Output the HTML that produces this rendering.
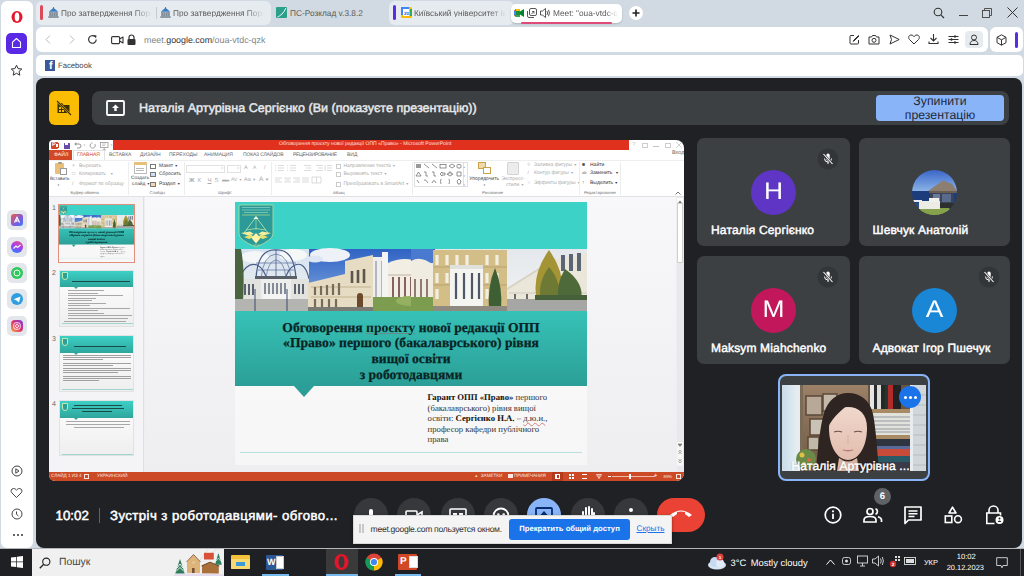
<!DOCTYPE html>
<html><head><meta charset="utf-8">
<style>
*{box-sizing:border-box;margin:0;padding:0}
html,body{text-rendering:geometricPrecision;width:1024px;height:576px;overflow:hidden;background:#d1dae2;font-family:"Liberation Sans",sans-serif;position:relative}
.a{position:absolute}
.t{position:absolute;white-space:nowrap;line-height:1}
svg.a{overflow:visible}
</style></head><body>
<!-- ============ SIDEBAR ============ -->
<div class="a" style="left:1px;top:1px;width:32px;height:547px;background:#fff;border-radius:6px"></div>
<!-- opera logo -->
<svg class="a" style="left:11px;top:11px" width="12" height="12" viewBox="0 0 12 12"><ellipse cx="6" cy="6" rx="5.5" ry="5.9" fill="#e5152b"/><ellipse cx="6" cy="6" rx="2.3" ry="4.4" fill="#fff"/></svg>
<!-- home button -->
<div class="a" style="left:6px;top:33px;width:21px;height:21px;background:#5a29e6;border-radius:5px"></div>
<svg class="a" style="left:11px;top:37px" width="11" height="12" viewBox="0 0 11 12"><path d="M1.5 5.2 L5.5 1.5 L9.5 5.2 V10.5 H1.5 Z" fill="none" stroke="#fff" stroke-width="1.1" stroke-linejoin="round"/></svg>
<!-- star -->
<svg class="a" style="left:10px;top:64px" width="13" height="13" viewBox="0 0 13 13"><path d="M6.5 1.2 L8.1 4.6 L11.8 5 L9 7.5 L9.8 11.2 L6.5 9.3 L3.2 11.2 L4 7.5 L1.2 5 L4.9 4.6 Z" fill="none" stroke="#333" stroke-width="1" stroke-linejoin="round"/></svg>
<!-- messenger apps -->
<div class="a" style="left:7px;top:210px;width:20px;height:20px;background:#e3e7ec;border-radius:5px"></div>
<div class="a" style="left:11px;top:214px;width:12px;height:12px;border-radius:3px;background:linear-gradient(135deg,#f15a3b,#7a5ce6 60%,#3b7df0)"></div>
<svg class="a" style="left:13px;top:216px" width="8" height="8" viewBox="0 0 8 8"><path d="M1.5 6.5 L4 1.5 L6.5 6.5 M3 5 H4.5" fill="none" stroke="#fff" stroke-width="1.3"/></svg>
<div class="a" style="left:7px;top:237px;width:20px;height:20px;background:#e3e7ec;border-radius:5px"></div>
<div class="a" style="left:11px;top:241px;width:12px;height:12px;border-radius:50%;background:linear-gradient(200deg,#f0527e,#a040f0 50%,#1a8cff)"></div>
<svg class="a" style="left:13px;top:244px" width="8" height="6" viewBox="0 0 8 6"><path d="M0.5 4.5 L3 2 L4.5 3.5 L7.5 1" fill="none" stroke="#fff" stroke-width="1.1"/></svg>
<div class="a" style="left:7px;top:263px;width:20px;height:20px;background:#e3e7ec;border-radius:5px"></div>
<div class="a" style="left:11px;top:267px;width:12px;height:12px;border-radius:50%;background:#2fc85a"></div>
<svg class="a" style="left:13px;top:269px" width="8" height="8" viewBox="0 0 8 8"><circle cx="4" cy="4" r="3" fill="none" stroke="#fff" stroke-width="1"/></svg>
<div class="a" style="left:7px;top:289px;width:20px;height:20px;background:#e3e7ec;border-radius:5px"></div>
<div class="a" style="left:11px;top:293px;width:12px;height:12px;border-radius:50%;background:#2f9ee0"></div>
<svg class="a" style="left:13px;top:296px" width="8" height="7" viewBox="0 0 8 7"><path d="M0.5 3.2 L7.5 0.5 L6 6.5 L3.5 4.5 Z" fill="#fff"/></svg>
<div class="a" style="left:7px;top:316px;width:20px;height:20px;background:#e3e7ec;border-radius:5px"></div>
<div class="a" style="left:11px;top:320px;width:12px;height:12px;border-radius:4px;background:linear-gradient(225deg,#7d3ce6,#e1306c 50%,#fcaf45)"></div>
<svg class="a" style="left:13px;top:322px" width="8" height="8" viewBox="0 0 8 8"><rect x="0.8" y="0.8" width="6.4" height="6.4" rx="2" fill="none" stroke="#fff" stroke-width="0.9"/><circle cx="4" cy="4" r="1.5" fill="none" stroke="#fff" stroke-width="0.9"/></svg>
<!-- bottom sidebar icons -->
<svg class="a" style="left:11px;top:465px" width="12" height="12" viewBox="0 0 12 12"><circle cx="6" cy="6" r="5" fill="none" stroke="#444" stroke-width="1"/><path d="M4.8 3.8 L8 6 L4.8 8.2 Z" fill="none" stroke="#444" stroke-width="1" stroke-linejoin="round"/></svg>
<svg class="a" style="left:10px;top:487px" width="13" height="12" viewBox="0 0 13 12"><path d="M6.5 10.5 L1.8 5.8 C0.5 4.4 1 1.6 3.5 1.5 C5 1.4 6 2.5 6.5 3.3 C7 2.5 8 1.4 9.5 1.5 C12 1.6 12.5 4.4 11.2 5.8 Z" fill="none" stroke="#444" stroke-width="1"/></svg>
<svg class="a" style="left:11px;top:508px" width="12" height="12" viewBox="0 0 12 12"><circle cx="6" cy="6" r="5" fill="none" stroke="#444" stroke-width="1"/><path d="M5.5 3.5 V6.3 L7.5 8" fill="none" stroke="#444" stroke-width="1"/></svg>
<div class="a" style="left:12.5px;top:533.5px;width:2.4px;height:2.4px;background:#333;border-radius:50%;box-shadow:4px 0 #333,8px 0 #333"></div>

<!-- ============ TABS ============ -->
<div class="a" style="left:36px;top:1px;width:235px;height:24px;background:#e6ebf0;border-radius:6px"></div>
<div class="a" style="left:40px;top:5px;width:3px;height:15px;background:#dc4a5a;border-radius:2px"></div>
<svg class="a" style="left:48px;top:7px" width="11" height="11" viewBox="0 0 11 11"><path d="M5.5 0.8 L10.3 4.8 H0.7 Z" fill="#3a7cc4"/><path d="M5.5 0 V1.5" stroke="#2a5c94" stroke-width="0.8"/><rect x="1" y="5" width="9" height="4.5" fill="#9aa6b2"/><path d="M2.3 5.5 V9 M4.3 5.5 V9 M6.7 5.5 V9 M8.7 5.5 V9" stroke="#6a7682" stroke-width="0.6"/><rect x="0.3" y="9.3" width="10.4" height="1.5" fill="#7a8692"/></svg>
<div class="t" style="left:61px;top:9px;font-size:8.3px;color:#5a5a5a;width:91px;overflow:hidden;-webkit-mask-image:linear-gradient(90deg,#000 80%,transparent)">Про затвердження Поряд</div>
<div class="a" style="left:156px;top:7px;width:1px;height:12px;background:#c5ccd3"></div>
<svg class="a" style="left:160px;top:7px" width="11" height="11" viewBox="0 0 11 11"><path d="M5.5 0.8 L10.3 4.8 H0.7 Z" fill="#3a7cc4"/><path d="M5.5 0 V1.5" stroke="#2a5c94" stroke-width="0.8"/><rect x="1" y="5" width="9" height="4.5" fill="#9aa6b2"/><path d="M2.3 5.5 V9 M4.3 5.5 V9 M6.7 5.5 V9 M8.7 5.5 V9" stroke="#6a7682" stroke-width="0.6"/><rect x="0.3" y="9.3" width="10.4" height="1.5" fill="#7a8692"/></svg>
<div class="t" style="left:173px;top:9px;font-size:8.3px;color:#5a5a5a;width:91px;overflow:hidden;-webkit-mask-image:linear-gradient(90deg,#000 80%,transparent)">Про затвердження Поряд</div>
<!-- PS tab -->
<svg class="a" style="left:276px;top:7px" width="11" height="11" viewBox="0 0 11 11"><rect width="11" height="11" rx="1" fill="#2aa08a"/><path d="M1.5 10 C4 9 8 6 9.8 1" fill="none" stroke="#fff" stroke-width="1"/></svg>
<div class="t" style="left:290px;top:9px;font-size:8.3px;color:#5a5a5a">ПС-Розклад v.3.8.2</div>
<!-- KNU tab -->
<div class="a" style="left:389px;top:1px;width:125px;height:24px;background:#e6ebf0;border-radius:6px"></div>
<div class="a" style="left:393px;top:5px;width:3px;height:15px;background:#5a2ae6;border-radius:2px"></div>
<svg class="a" style="left:401px;top:7px" width="11" height="11" viewBox="0 0 11 11"><rect width="11" height="11" rx="1.5" fill="#fbbc04"/><rect x="0" y="0" width="8" height="8" fill="#4285f4"/><rect x="2" y="2" width="7" height="7" fill="#fff"/><rect x="8.5" y="2" width="2.5" height="7" fill="#34a853"/><text x="5.5" y="7.6" font-size="4.6" text-anchor="middle" fill="#1a73e8" font-family="Liberation Sans" font-weight="bold">20</text></svg>
<div class="t" style="left:414px;top:9px;font-size:8.3px;color:#5a5a5a;width:92px;overflow:hidden;-webkit-mask-image:linear-gradient(90deg,#000 82%,transparent)">Київський університет імені</div>
<!-- active tab -->
<div class="a" style="left:511px;top:4px;width:111px;height:19px;background:#fff;border-radius:5px;box-shadow:0 1px 2px rgba(0,0,0,.18)"></div>
<div class="a" style="left:521px;top:22px;width:91px;height:2px;background:#e04a78;border-radius:1px"></div>
<svg class="a" style="left:514px;top:9px" width="10" height="8" viewBox="0 0 10 8"><path d="M0 2 L2 0 H6 V8 H2 L0 6 Z" fill="#1e8e3e"/><path d="M0 2 L2 0 V8 L0 6Z" fill="#ea4335"/><rect x="2" y="0" width="4" height="2" fill="#fbbc04"/><rect x="2" y="6" width="4" height="2" fill="#34a853"/><path d="M0 2 H2 V6 H0Z" fill="#4285f4"/><path d="M6 2.5 L10 0 V8 L6 5.5Z" fill="#00832d"/></svg>
<svg class="a" style="left:527px;top:8px" width="10" height="10" viewBox="0 0 10 10"><rect x="2.5" y="0.5" width="7" height="7" rx="1.5" fill="none" stroke="#444" stroke-width="0.9"/><path d="M0.5 3 V8 A1.5 1.5 0 0 0 2 9.5 H7" fill="none" stroke="#444" stroke-width="0.9"/><path d="M4.5 6 L7 3.5 M5 3.5 H7 V5.5" fill="none" stroke="#444" stroke-width="0.8"/></svg>
<svg class="a" style="left:540px;top:8px" width="11" height="10" viewBox="0 0 11 10"><path d="M0.5 3 H2.5 L5.5 0.5 V9.5 L2.5 7 H0.5 Z" fill="none" stroke="#444" stroke-width="0.9" stroke-linejoin="round"/><path d="M7 3 Q8 5 7 7 M8.5 1.8 Q10.3 5 8.5 8.2" fill="none" stroke="#444" stroke-width="0.9"/></svg>
<div class="t" style="left:553px;top:9px;font-size:8.3px;color:#5a5a5a;width:65px;overflow:hidden;-webkit-mask-image:linear-gradient(90deg,#000 82%,transparent)">Meet: "oua-vtdc-qzk"</div>
<!-- new tab + -->
<div class="a" style="left:629px;top:6px;width:14px;height:14px;background:#fff;border-radius:50%"></div>
<svg class="a" style="left:632px;top:9px" width="8" height="8" viewBox="0 0 8 8"><path d="M4 0.5 V7.5 M0.5 4 H7.5" stroke="#222" stroke-width="1.6"/></svg>
<!-- window controls -->
<svg class="a" style="left:933px;top:7px" width="12" height="12" viewBox="0 0 12 12"><circle cx="5" cy="5" r="3.8" fill="none" stroke="#333" stroke-width="1.1"/><path d="M7.8 7.8 L11 11" stroke="#333" stroke-width="1.2"/></svg>
<div class="a" style="left:959px;top:15px;width:9px;height:1px;background:#444"></div>
<svg class="a" style="left:982px;top:8px" width="10" height="10" viewBox="0 0 10 10"><rect x="0.5" y="2.5" width="7" height="7" fill="none" stroke="#444" stroke-width="0.9"/><path d="M2.5 2.5 V0.5 H9.5 V7.5 H7.5" fill="none" stroke="#444" stroke-width="0.9"/></svg>
<svg class="a" style="left:1007px;top:7px" width="11" height="11" viewBox="0 0 11 11"><path d="M0.5 0.5 L10.5 10.5 M10.5 0.5 L0.5 10.5" stroke="#333" stroke-width="1"/></svg>

<!-- ============ ADDRESS BAR ============ -->
<div class="a" style="left:36px;top:27px;width:952px;height:25px;background:#fff;border-radius:6px"></div>
<svg class="a" style="left:45px;top:35px" width="6" height="9" viewBox="0 0 6 9"><path d="M5 0.5 L1 4.5 L5 8.5" fill="none" stroke="#b5bac0" stroke-width="1"/></svg>
<svg class="a" style="left:69px;top:35px" width="6" height="9" viewBox="0 0 6 9"><path d="M1 0.5 L5 4.5 L1 8.5" fill="none" stroke="#b5bac0" stroke-width="1"/></svg>
<svg class="a" style="left:87px;top:34px" width="11" height="11" viewBox="0 0 11 11"><path d="M9.2 5.5 A3.8 3.8 0 1 1 7.8 2.5" fill="none" stroke="#333" stroke-width="1.2"/><path d="M6.5 1 L9.5 1.5 L9 4.5 Z" fill="#333"/></svg>
<svg class="a" style="left:111px;top:35px" width="13" height="10" viewBox="0 0 13 10"><rect x="0.6" y="1.6" width="8" height="7" rx="1" fill="none" stroke="#333" stroke-width="1.1"/><path d="M8.6 4 L12 2 V8 L8.6 6" fill="none" stroke="#333" stroke-width="1.1" stroke-linejoin="round"/></svg>
<svg class="a" style="left:127px;top:34px" width="9" height="11" viewBox="0 0 9 11"><path d="M2 5 V3.5 A2.5 2.5 0 0 1 7 3.5 V5" fill="none" stroke="#333" stroke-width="1.2"/><rect x="0.5" y="5" width="8" height="6" rx="1" fill="#333"/></svg>
<div class="t" style="left:144px;top:36.3px;font-size:8.9px;color:#80868b">meet.<span style="color:#333">google.com</span>/oua-vtdc-qzk</div>
<!-- right icons in address bar -->
<svg class="a" style="left:849px;top:34px" width="11" height="11" viewBox="0 0 11 11"><path d="M5 1.5 H2 A1 1 0 0 0 1 2.5 V9 A1 1 0 0 0 2 10 H8.5 A1 1 0 0 0 9.5 9 V6" fill="none" stroke="#333" stroke-width="1"/><path d="M4.5 6.5 L9.5 1.5 L10 2 L5 7 L4 7.2Z" fill="none" stroke="#333" stroke-width="1"/></svg>
<svg class="a" style="left:868px;top:34px" width="12" height="11" viewBox="0 0 12 11"><path d="M1 3 H3.5 L4.5 1.5 H7.5 L8.5 3 H11 V10 H1 Z" fill="none" stroke="#333" stroke-width="1" stroke-linejoin="round"/><circle cx="6" cy="6.3" r="2" fill="none" stroke="#333" stroke-width="1"/></svg>
<svg class="a" style="left:889px;top:34px" width="11" height="11" viewBox="0 0 11 11"><path d="M1 1 L10.2 5.5 L1 10 L2.5 5.5 Z" fill="none" stroke="#333" stroke-width="1" stroke-linejoin="round"/></svg>
<svg class="a" style="left:908px;top:34px" width="12" height="11" viewBox="0 0 12 11"><path d="M6 10 L1.5 5.5 C0 4 0.5 1.2 3 1 C4.5 0.9 5.5 2 6 2.7 C6.5 2 7.5 0.9 9 1 C11.5 1.2 12 4 10.5 5.5 Z" fill="none" stroke="#333" stroke-width="1"/></svg>
<svg class="a" style="left:928px;top:33px" width="11" height="12" viewBox="0 0 11 12"><path d="M5.5 1 V8 M2.5 5 L5.5 8 L8.5 5" fill="none" stroke="#333" stroke-width="1.1"/><path d="M1 8.5 V10.5 H10 V8.5" fill="none" stroke="#333" stroke-width="1.1"/></svg>
<svg class="a" style="left:948px;top:34px" width="11" height="11" viewBox="0 0 11 11"><path d="M0.5 2.5 H10.5 M0.5 5.5 H10.5 M0.5 8.5 H10.5" stroke="#333" stroke-width="1"/><path d="M7 1.2 V3.8 M3.5 4.2 V6.8 M7 7.2 V9.8" stroke="#333" stroke-width="1.4"/></svg>
<div class="a" style="left:965px;top:31px;width:18px;height:17px;background:#e6ebf0;border-radius:4px"></div>
<svg class="a" style="left:969px;top:34px" width="10" height="11" viewBox="0 0 10 11"><circle cx="5" cy="3.5" r="2.5" fill="none" stroke="#333" stroke-width="1"/><path d="M1 10.5 C1 7.5 3 6.5 5 6.5 C7 6.5 9 7.5 9 10.5 Z" fill="none" stroke="#333" stroke-width="1"/></svg>
<div class="a" style="left:990px;top:27px;width:33px;height:25px;background:#fff;border-radius:6px"></div>
<svg class="a" style="left:996px;top:34px" width="11" height="12" viewBox="0 0 11 12"><path d="M5.5 0.8 L10 3.3 V8.7 L5.5 11.2 L1 8.7 V3.3 Z M1 3.3 L5.5 5.8 L10 3.3 M5.5 5.8 V11.2" fill="none" stroke="#333" stroke-width="1" stroke-linejoin="round"/></svg>
<div class="a" style="left:1015px;top:32px;width:3px;height:16px;background:#5a2ae6;border-radius:2px"></div>

<!-- ============ BOOKMARKS ============ -->
<div class="a" style="left:36px;top:55px;width:987px;height:21px;background:#fff;border-radius:5px"></div>
<div class="a" style="left:45px;top:60px;width:10px;height:11px;background:#3b5998"></div>
<div class="t" style="left:49px;top:61px;font-size:11px;font-weight:bold;color:#fff">f</div>
<div class="t" style="left:58px;top:61.5px;font-size:7.7px;color:#444">Facebook</div>

<!-- ============ MEET ============ -->
<div class="a" style="left:36px;top:78px;width:986px;height:470px;background:#202124;border-radius:8px"></div>
<div class="a" style="left:0;top:548px;width:1024px;height:1px;background:#b4b8bc"></div>

<!-- header -->
<div class="a" style="left:49px;top:91px;width:30px;height:34px;background:#fbbc04;border-radius:6px"></div>
<svg class="a" style="left:56px;top:100px" width="16" height="16" viewBox="0 0 16 16"><path d="M1.5 3 H6 L7.5 5 H13.5 V13 H1.5 Z" fill="#3a3000"/><path d="M3 7 H5 V9 H3Z M6 7 H8 V9 H6Z M3 10 H5 V12 H3Z M6 10 H8 V12 H6Z" fill="#fbbc04"/><path d="M1 1 L15 15" stroke="#fbbc04" stroke-width="2.2"/><path d="M1 1 L15 15" stroke="#3a3000" stroke-width="1.1"/></svg>
<div class="a" style="left:92px;top:91px;width:917px;height:34px;background:#3c4043;border-radius:8px"></div>
<svg class="a" style="left:106px;top:100px" width="19" height="16" viewBox="0 0 19 16"><rect x="1" y="1" width="17" height="14" rx="1" fill="none" stroke="#fff" stroke-width="1.8"/><path d="M9.5 4.5 L6 8 H8.3 V11 H10.7 V8 H13 Z" fill="#fff"/></svg>
<div class="t" style="left:139px;top:102px;font-size:12.55px;color:#e8eaed;-webkit-text-stroke:0.45px #e8eaed">Наталія Артурівна Сергієнко (Ви (показуєте презентацію))</div>
<div class="a" style="left:876px;top:95px;width:128px;height:26px;background:#8ab4f8;border-radius:4px"></div>
<div class="t" style="left:876px;top:95px;width:128px;text-align:center;font-size:12.3px;line-height:13.5px;color:#1f2a3a;white-space:normal">Зупинити<br>презентацію</div>

<!-- ===== PPT WINDOW ===== -->
<div class="a" style="left:49px;top:140px;width:635px;height:341px;background:#fff;border-radius:4px 8px 8px 6px;overflow:hidden">
  <!-- title bar -->
  <div class="a" style="left:64px;top:0;width:516px;height:10px;background:#e0301e"></div>
  <div class="t" style="left:230px;top:2.2px;font-size:5.1px;color:#fbe3df">Обговорення проєкту нової редакції ОПП «Право» -  Microsoft PowerPoint</div>
  <!-- QAT -->
  <div class="a" style="left:2px;top:1.5px;width:7px;height:7.5px;background:#d24726;border-radius:1px"></div>
  <div class="a" style="left:6px;top:2.5px;width:4px;height:5.5px;background:#fff;border:0.5px solid #d24726"></div>
  <div class="t" style="left:3px;top:2.5px;font-size:5.5px;color:#fff;font-weight:bold">P</div>
  <div class="a" style="left:14.5px;top:2.5px;width:6px;height:6px;background:#6a4aa8;border-radius:0.5px"></div>
  <div class="a" style="left:16px;top:2.5px;width:3px;height:2px;background:#fff"></div>
  <svg class="a" style="left:25px;top:2px" width="8" height="7" viewBox="0 0 8 7"><path d="M2 2 H5 A2 2 0 0 1 5 6 H3" fill="none" stroke="#888" stroke-width="0.9"/><path d="M0.3 2 L2.3 0.3 V3.7Z" fill="#888"/></svg>
  <div class="t" style="left:34px;top:2.5px;font-size:4px;color:#aaa"><span style="font-size:0.7em">▼</span></div>
  <svg class="a" style="left:39.5px;top:2px" width="7" height="7" viewBox="0 0 7 7"><path d="M5.8 2 A2.6 2.6 0 1 1 3.5 0.9" fill="none" stroke="#999" stroke-width="0.9"/></svg>
  <svg class="a" style="left:51px;top:1.5px" width="9" height="8" viewBox="0 0 9 8"><rect x="0.5" y="0.5" width="7.5" height="5" fill="none" stroke="#999" stroke-width="0.8"/><path d="M2 2 H6 M2 3.5 H5" stroke="#aaa" stroke-width="0.6"/><path d="M4.2 5.5 V8 M2.5 8 H6" stroke="#999" stroke-width="0.8"/></svg>
  <div class="t" style="left:61px;top:2.5px;font-size:4px;color:#aaa"><span style="font-size:0.7em">▼</span></div>
  <!-- window btns -->
  <div class="t" style="left:583px;top:2px;font-size:6px;color:#c4c4c4">?</div>
  <div class="a" style="left:593px;top:2.5px;width:6px;height:5px;border:0.7px solid #ccc"></div>
  <div class="a" style="left:604px;top:5.5px;width:6px;height:0.7px;background:#c4c4c4"></div>
  <div class="a" style="left:616px;top:2.5px;width:5.5px;height:5px;border:0.7px solid #ccc"></div>
  <svg class="a" style="left:626.5px;top:2px" width="6" height="6" viewBox="0 0 6 6"><path d="M0 0 L6 6 M6 0 L0 6" stroke="#c0c0c0" stroke-width="0.7"/></svg>
  <!-- tabs row -->
  <div class="a" style="left:0;top:10px;width:23px;height:10px;background:#d24726"></div>
  <div class="t" style="left:5px;top:12.5px;font-size:5.2px;color:#fff">ФАЙЛ</div>
  <div class="a" style="left:24px;top:10px;width:32px;height:11px;background:#fff;border:1px solid #e2e2e2;border-bottom:none"></div>
  <div class="t" style="left:28px;top:12.5px;font-size:5px;color:#d24726">ГЛАВНАЯ</div>
  <div class="t" style="left:60px;top:12.5px;font-size:5px;color:#666">ВСТАВКА</div>
  <div class="t" style="left:91px;top:12.5px;font-size:5px;color:#666">ДИЗАЙН</div>
  <div class="t" style="left:120px;top:12.5px;font-size:5px;color:#666">ПЕРЕХОДЫ</div>
  <div class="t" style="left:155px;top:12.5px;font-size:5px;color:#666">АНИМАЦИЯ</div>
  <div class="t" style="left:194px;top:12.5px;font-size:5px;color:#666;letter-spacing:-0.15px">ПОКАЗ СЛАЙДОВ</div>
  <div class="t" style="left:244px;top:12.5px;font-size:5px;color:#666;letter-spacing:-0.3px">РЕЦЕНЗИРОВАНИЕ</div>
  <div class="t" style="left:298px;top:12.5px;font-size:5px;color:#666">ВИД</div>
  <div class="t" style="left:623px;top:11px;font-size:5.5px;color:#666">Вход</div>
  <!-- ribbon -->
  <div class="a" style="left:0;top:20px;width:635px;height:37px;background:#fff;border-top:1px solid #eeeeee;border-bottom:1px solid #e2e2e4"></div>
  <!-- clipboard -->
  <div class="a" style="left:6px;top:23px;width:9px;height:11px;background:#e8c07a;border-radius:1px"></div>
  <div class="a" style="left:8.5px;top:22px;width:4px;height:2px;background:#999;border-radius:1px"></div>
  <div class="a" style="left:11px;top:28px;width:6.5px;height:7px;background:#fff;border:0.8px solid #999"></div>
  <div class="t" style="left:1px;top:37px;font-size:4.6px;color:#444">Вставить</div>
  <div class="t" style="left:8px;top:43px;font-size:4px;color:#666"><span style="font-size:0.7em">▼</span></div>
  <div class="t" style="left:23px;top:23.5px;font-size:5px;color:#aaa">×</div>
  <div class="t" style="left:30px;top:23.5px;font-size:5px;color:#aaa">Вырезать</div>
  <div class="t" style="left:23px;top:32px;font-size:5px;color:#aaa">□</div>
  <div class="t" style="left:30px;top:32px;font-size:5px;color:#aaa">Копировать &nbsp; <span style="font-size:0.7em">▼</span></div>
  <div class="t" style="left:23px;top:41.5px;font-size:5px;color:#aaa">/</div>
  <div class="t" style="left:30px;top:41.5px;font-size:5px;color:#aaa">Формат по образцу</div>
  <div class="t" style="left:21.5px;top:51px;font-size:4.2px;color:#777">Буфер обмена</div>
  <div class="t" style="left:73px;top:51px;font-size:4px;color:#999">·</div>
  <div class="a" style="left:79px;top:22px;width:1px;height:33px;background:#ededed"></div>
  <!-- slides -->
  <div class="a" style="left:85px;top:22px;width:12.5px;height:12px;background:#fff;border:0.8px solid #bbb"></div>
  <div class="a" style="left:85px;top:22px;width:12.5px;height:3px;background:#e8c07a"></div>
  <div class="a" style="left:87px;top:28px;width:8px;height:0.8px;background:#bbb;box-shadow:0 2px 0 #bbb"></div>
  <div class="t" style="left:82px;top:36.5px;font-size:4.8px;color:#444">Создать</div>
  <div class="t" style="left:83px;top:42.5px;font-size:4.8px;color:#444">слайд <span style="font-size:0.7em">▼</span></div>
  <div class="a" style="left:101px;top:23.5px;width:6px;height:5px;border:0.8px solid #777"></div>
  <div class="t" style="left:110px;top:23.5px;font-size:5px;color:#444">Макет <span style="font-size:0.7em">▼</span></div>
  <div class="a" style="left:101px;top:32px;width:6px;height:5px;border:0.8px solid #777;background:#cfe0f4"></div>
  <div class="t" style="left:110px;top:32px;font-size:5px;color:#444">Сбросить</div>
  <div class="a" style="left:101px;top:41.5px;width:6px;height:5px;border:0.8px solid #777;background:#f4d8a8"></div>
  <div class="t" style="left:110px;top:41.5px;font-size:5px;color:#444">Раздел <span style="font-size:0.7em">▼</span></div>
  <div class="t" style="left:100.5px;top:51px;font-size:4.2px;color:#777">Слайды</div>
  <div class="a" style="left:134.5px;top:22px;width:1px;height:33px;background:#ededed"></div>
  <!-- font -->
  <div class="a" style="left:136.5px;top:25px;width:39px;height:8px;border:0.8px solid #e2e2e2"></div>
  <div class="a" style="left:177.5px;top:25px;width:14.5px;height:8px;border:0.8px solid #e2e2e2"></div>
  <div class="t" style="left:172px;top:27px;font-size:3.5px;color:#bbb"><span style="font-size:0.7em">▼</span></div>
  <div class="t" style="left:188px;top:27px;font-size:3.5px;color:#bbb"><span style="font-size:0.7em">▼</span></div>
  <div class="t" style="left:195px;top:25.5px;font-size:5.5px;color:#aaa">A</div>
  <div class="t" style="left:204px;top:25.5px;font-size:5px;color:#aaa">A</div>
  <div class="t" style="left:215px;top:25.5px;font-size:5.5px;color:#aaa">/</div>
  <div class="t" style="left:140px;top:37.5px;font-size:6px;color:#aaa;font-weight:bold">Ж</div>
  <div class="t" style="left:148.5px;top:37.5px;font-size:6px;color:#aaa;font-style:italic">К</div>
  <div class="t" style="left:158.5px;top:37.5px;font-size:6px;color:#aaa;text-decoration:underline">Ч</div>
  <div class="t" style="left:165.5px;top:37.5px;font-size:6px;color:#aaa">S</div>
  <div class="t" style="left:173px;top:38.5px;font-size:4.5px;color:#aaa;text-decoration:line-through">abc</div>
  <div class="t" style="left:182px;top:37.5px;font-size:5px;color:#aaa">AV <span style="font-size:0.7em">▼</span></div>
  <div class="t" style="left:195px;top:37.5px;font-size:5.5px;color:#aaa">Aa <span style="font-size:0.7em">▼</span></div>
  <div class="t" style="left:210px;top:37px;font-size:6.5px;color:#aaa">A <span style="font-size:0.7em">▼</span></div>
  <div class="t" style="left:169px;top:51px;font-size:4.2px;color:#777">Шрифт</div>
  <div class="t" style="left:215px;top:51px;font-size:4px;color:#999">·</div>
  <div class="a" style="left:222px;top:22px;width:1px;height:33px;background:#ededed"></div>
  <!-- paragraph -->
  <svg class="a" style="left:225px;top:24px" width="60" height="20" viewBox="0 0 60 20" fill="none" stroke="#c4c4c4" stroke-width="0.6">
    <path d="M1 1.5 H2 M4 1.5 H10 M1 4 H2 M4 4 H10 M1 6.5 H2 M4 6.5 H10"/><path d="M13 1.5 H14 M16 1.5 H22 M13 4 H14 M16 4 H22 M13 6.5 H14 M16 6.5 H22"/>
    <path d="M30 1.5 H37 M32 4 H37 M30 6.5 H37 M42 1.5 H49 M44 4 H49 M42 6.5 H49"/><path d="M51 1 V7 M53 1.5 H58 M53 4 H58 M53 6.5 H58"/>
    <path d="M1 14 H8 M1 16 H6 M1 18 H8 M10 14 H17 M11 16 H16 M10 18 H17 M19 14 H26 M21 16 H26 M19 18 H26 M28 14 H35 M28 16 H35 M28 18 H35"/>
    <path d="M38 13 H47 V19 H38 Z M42.5 13 V19"/>
  </svg>
  <div class="a" style="left:287px;top:23.5px;width:5px;height:5px;border:0.8px solid #ccc"></div>
  <div class="t" style="left:294.5px;top:23.5px;font-size:5px;color:#aaa">Направление текста <span style="font-size:0.7em">▼</span></div>
  <div class="a" style="left:287px;top:32px;width:5px;height:5px;border:0.8px solid #ccc"></div>
  <div class="t" style="left:294.5px;top:32px;font-size:5px;color:#aaa">Выровнять текст <span style="font-size:0.7em">▼</span></div>
  <div class="a" style="left:287px;top:41.5px;width:5px;height:5px;border:0.8px solid #ccc"></div>
  <div class="t" style="left:294.5px;top:41.5px;font-size:5px;color:#aaa">Преобразовать в SmartArt <span style="font-size:0.7em">▼</span></div>
  <div class="t" style="left:284px;top:51px;font-size:4.2px;color:#777">Абзац</div>
  <div class="t" style="left:356px;top:51px;font-size:4px;color:#999">·</div>
  <div class="a" style="left:363px;top:22px;width:1px;height:33px;background:#ededed"></div>
  <!-- drawing -->
  <div class="a" style="left:365px;top:21.5px;width:54px;height:25px;border:0.8px solid #e0e0e0"></div>
  <div class="a" style="left:413.5px;top:21.5px;width:5.5px;height:25px;border-left:0.8px solid #e0e0e0"></div>
  <div class="t" style="left:414px;top:23px;font-size:3.5px;color:#999;line-height:8px;white-space:pre"><span style="font-size:0.7em">▲</span>
<span style="font-size:0.7em">▼</span>
<span style="font-size:0.7em">▼</span></div>
  <svg class="a" style="left:366px;top:23px" width="47" height="22" viewBox="0 0 47 22" fill="none" stroke="#666" stroke-width="0.7">
    <rect x="1" y="1" width="5" height="4" fill="#999" stroke="none"/><path d="M9 1 L14 5 M17 1 L22 5"/><rect x="25" y="1.5" width="6" height="3.5"/><path d="M34 3 L37 1 L40 3 L37 5 Z"/><rect x="42" y="1.5" width="4" height="3.5" rx="1"/>
    <path d="M1 13 L3.5 9 L6 13 Z M9 9 H11 V13 H13 M17 9 H19 V13 H21 M25 11 L27 9 V10 H30 V12 H27 V13 Z M34 9 H36 V11 H38 L35 13 L32 11 H34Z M42 9 H46 V13 H42Z"/>
    <path d="M2 17 L4 20 M9 17 Q11 16 13 20 M17 20 Q19 15 21 20 M26 16 Q25 18.5 26 21 M34 16 Q35 18.5 34 21 M42 18 L44 16 L46 18 L45 21 H43Z"/>
  </svg>
  <div class="a" style="left:429px;top:22px;width:8px;height:7px;background:#f0d9a8;border:0.8px solid #c9a24a"></div>
  <div class="a" style="left:434px;top:26.5px;width:8px;height:7px;background:#fff;border:0.8px solid #c9a24a"></div>
  <div class="t" style="left:420.3px;top:36.5px;font-size:5px;color:#444">Упорядочить</div>
  <div class="t" style="left:434px;top:43px;font-size:4px;color:#666"><span style="font-size:0.7em">▼</span></div>
  <div class="a" style="left:458px;top:22px;width:11.5px;height:13px;background:#ececec;border:0.8px solid #d4d4d4;border-radius:1px"></div>
  <div class="t" style="left:452.5px;top:36.5px;font-size:5px;color:#aaa">Экспресс-</div>
  <div class="t" style="left:457px;top:42.5px;font-size:5px;color:#aaa">стили <span style="font-size:0.7em">▼</span></div>
  <div class="t" style="left:478.5px;top:22.5px;font-size:5px;color:#aaa">◊</div>
  <div class="t" style="left:485px;top:22.5px;font-size:5px;color:#aaa">Заливка фигуры <span style="font-size:0.7em">▼</span></div>
  <div class="t" style="left:478.5px;top:31.3px;font-size:5px;color:#aaa">/</div>
  <div class="t" style="left:485px;top:31.3px;font-size:5px;color:#aaa">Контур фигуры <span style="font-size:0.7em">▼</span></div>
  <div class="t" style="left:478.5px;top:41px;font-size:5px;color:#aaa">○</div>
  <div class="t" style="left:485px;top:41px;font-size:5px;color:#aaa">Эффекты фигуры <span style="font-size:0.7em">▼</span></div>
  <div class="t" style="left:433px;top:51px;font-size:4.2px;color:#777">Рисование</div>
  <div class="t" style="left:524px;top:51px;font-size:4px;color:#999">·</div>
  <div class="a" style="left:530px;top:22px;width:1px;height:33px;background:#ededed"></div>
  <!-- editing -->
  <div class="t" style="left:533px;top:22.5px;font-size:5px;color:#444;font-weight:bold">■</div>
  <div class="t" style="left:541px;top:22.5px;font-size:5px;color:#333">Найти</div>
  <div class="t" style="left:533px;top:31.3px;font-size:4px;color:#666">ab</div>
  <div class="t" style="left:541px;top:31.3px;font-size:5px;color:#333">Заменить &nbsp;<span style="font-size:0.7em">▼</span></div>
  <div class="t" style="left:533px;top:41px;font-size:5px;color:#666">↑</div>
  <div class="t" style="left:541px;top:41px;font-size:5px;color:#333">Выделить <span style="font-size:0.7em">▼</span></div>
  <div class="t" style="left:535px;top:51px;font-size:4.2px;color:#777">Редактирование</div>
  <div class="a" style="left:570.5px;top:22px;width:1px;height:33px;background:#ededed"></div>
  <svg class="a" style="left:626px;top:51px" width="6" height="4" viewBox="0 0 6 4"><path d="M0.5 3.5 L3 1 L5.5 3.5" fill="none" stroke="#555" stroke-width="0.8"/></svg>
  <!-- work area -->
  <div class="a" style="left:0;top:57px;width:635px;height:275px;background:#eeeef0"></div>
  <div class="a" style="left:0;top:57px;width:95px;height:275px;background:#f4f4f6;border-right:1px solid #e0e0e2"></div>
  <div class="a" style="left:96px;top:57px;width:531px;height:275px;background:linear-gradient(#f8f8fa,#eeeef0)"></div>
  <!-- scrollbar -->
  <div class="a" style="left:627.5px;top:57px;width:7.5px;height:275px;background:#e9e9eb"></div>
  <div class="a" style="left:628px;top:58px;width:6px;height:6px;background:#fff"></div>
  <svg class="a" style="left:629px;top:59.5px" width="4" height="3" viewBox="0 0 4 3"><path d="M0 3 L2 0.5 L4 3Z" fill="#777"/></svg>
  <div class="a" style="left:628px;top:63px;width:6px;height:60px;background:#fff;border:0.7px solid #cfcfcf"></div>
  <div class="a" style="left:628px;top:302px;width:6px;height:24px;background:#f6f6f6"></div>
  <svg class="a" style="left:629px;top:303.5px" width="4" height="20" viewBox="0 0 4 20"><path d="M0 0 L2 2.5 L4 0Z M0.5 8 L2 6 L3.5 8 M0.5 10 L2 8 L3.5 10 M0.5 15 L2 17 L3.5 15 M0.5 17 L2 19 L3.5 17" fill="none" stroke="#777" stroke-width="0.6"/><path d="M0 0 L2 2.5 L4 0Z" fill="#777"/></svg>
  <!-- status bar -->
  <div class="a" style="left:0;top:332px;width:635px;height:9px;background:#cc4a26"></div>
  <div class="t" style="left:2px;top:334.3px;font-size:4.6px;color:#fbe6df">СЛАЙД 1 ИЗ 4</div>
  <div class="a" style="left:35px;top:334px;width:5px;height:4.5px;border:0.7px solid #fbe6df"></div>
  <div class="t" style="left:48px;top:334.3px;font-size:4.6px;color:#fbe6df">УКРАИНСКИЙ</div>
  <div class="t" style="left:425.5px;top:334px;font-size:4.6px;color:#fbe6df"><span style="font-size:0.8em">▲</span></div>
  <div class="t" style="left:431.8px;top:334.3px;font-size:4.6px;color:#fbe6df">ЗАМЕТКИ</div>
  <div class="a" style="left:459.3px;top:334px;width:4.5px;height:4px;background:#fbe6df"></div>
  <div class="t" style="left:465px;top:334.3px;font-size:4.6px;color:#fbe6df;letter-spacing:-0.1px">ПРИМЕЧАНИЯ</div>
  <div class="a" style="left:502.7px;top:332px;width:11px;height:9px;background:#b53a1c"></div>
  <div class="a" style="left:505.5px;top:334px;width:5px;height:5px;border:0.8px solid #fff;border-left-width:2px"></div>
  <div class="a" style="left:519.5px;top:334px;width:2px;height:2px;background:#fff;box-shadow:3px 0 #fff,0 3px #fff,3px 3px #fff"></div>
  <div class="a" style="left:532.5px;top:334px;width:5px;height:5px;border-top:1.5px solid #fff;border-bottom:0.8px solid #fff"></div>
  <svg class="a" style="left:546.5px;top:334px" width="6" height="5" viewBox="0 0 6 5"><path d="M0.5 0.5 H5.5 L3 4.5Z M2 2 H4" fill="none" stroke="#fff" stroke-width="0.7"/></svg>
  <div class="a" style="left:558.5px;top:336.2px;width:3px;height:0.8px;background:#fff"></div>
  <div class="a" style="left:563px;top:336.3px;width:43px;height:0.7px;background:#f0b8a8"></div>
  <div class="a" style="left:580px;top:334px;width:1.5px;height:5px;background:#fff"></div>
  <div class="t" style="left:605px;top:333.5px;font-size:5.5px;color:#fff;font-weight:bold">+</div>
  <div class="t" style="left:614.5px;top:334.5px;font-size:4.3px;color:#fbe6df">89%</div>
  <div class="a" style="left:626.5px;top:334px;width:5px;height:5px;border:0.7px solid #fbe6df"></div>
</div>

<!-- ===== SLIDE THUMBNAILS (page coords) ===== -->
<div class="t" style="left:52px;top:205px;font-size:7px;color:#666">1</div>
<div class="a" style="left:57.5px;top:203.5px;width:77.5px;height:59.5px;border:1.3px solid #e0907a;background:#fff"></div>
<div class="a" style="left:59px;top:205px;width:75px;height:56.5px;overflow:hidden;background:#fff">
<div class="a" style="left:0;top:0;width:352px;height:263px;transform:scale(0.2131,0.2148);transform-origin:0 0;background:linear-gradient(#fdfdfd,#f6f6f6)">
  <div class="a" style="left:0;top:0;width:352px;height:47px;background:#3dd2c8"></div>
  <!-- logo -->
  <svg class="a" style="left:2.5px;top:2px" width="36" height="44" viewBox="0 0 36 44">
    <path d="M1 1 H35 V30 Q35 36 18 43 Q1 36 1 30 Z" fill="#2b9a98" stroke="#9ad8a4" stroke-width="1"/>
    <path d="M4 3.5 H32 M4 6 H32 M6 8.5 H30" stroke="#7cc8b8" stroke-width="0.9"/>
    <path d="M4 11 H32" stroke="#b8e08a" stroke-width="0.7"/>
    <path d="M18 13 L30 29 M18 13 L6 29" fill="none" stroke="#c4e8a0" stroke-width="0.8"/>
    <path d="M15.5 15 L18 12 L20.5 15 Z" fill="#f8f8e0"/>
    <path d="M18 15 V26" stroke="#c4e8a0" stroke-width="0.6"/>
    <path d="M8 26 Q18 23 28 26" fill="none" stroke="#c4e8a0" stroke-width="0.7"/>
    <path d="M3 29 L12 27.5 L16 30 L10 31.5Z M33 29 L24 27.5 L20 30 L26 31.5Z" fill="#f4eea0"/>
    <path d="M6 33 L13 30.5 L16 33 L11 35Z M30 33 L23 30.5 L20 33 L25 35Z" fill="#e8e070"/>
    <path d="M18 29 L22.5 34 L18 39.5 L13.5 34 Z" fill="#fff4a8"/>
    <text x="18" y="41.5" font-size="3" text-anchor="middle" fill="#c8e8b0" font-family="Liberation Serif">1834</text>
  </svg>
  <!-- photo strip -->
  <svg class="a" style="left:0;top:47px" width="352" height="62" viewBox="0 0 352 62">
    <defs>
      <linearGradient id="sky1" x1="0" y1="0" x2="0" y2="1"><stop offset="0" stop-color="#d6e2ee"/><stop offset="1" stop-color="#eef2f2"/></linearGradient>
      <linearGradient id="sky2" x1="0" y1="0" x2="0" y2="1"><stop offset="0" stop-color="#2f62c4"/><stop offset="1" stop-color="#8cb2e2"/></linearGradient>
      <linearGradient id="sky3" x1="0" y1="0" x2="0" y2="1"><stop offset="0" stop-color="#e4e8ec"/><stop offset="1" stop-color="#f2f4f4"/></linearGradient>
    </defs>
    <!-- panel 1 -->
    <rect x="0" y="0" width="74" height="62" fill="url(#sky1)"/>
    <ellipse cx="20" cy="8" rx="14" ry="6" fill="#f4f6f8"/><ellipse cx="58" cy="6" rx="14" ry="6" fill="#f6f8f8"/>
    <path d="M21 31 Q22 0 41 1 Q60 0 61 31" fill="none" stroke="#4a5e8c" stroke-width="1.3"/>
    <path d="M26 30 Q28 6 41 5 Q54 6 56 30 M31 29 Q33 12 41 11 Q49 12 51 29 M21 14 H61 M23 21 H59" fill="none" stroke="#6a7ca4" stroke-width="0.8"/>
    <path d="M3 34 Q10 12 22 16 Q30 20 32 32 M50 32 Q52 20 60 16 Q70 12 74 30" fill="none" stroke="#4a5e8c" stroke-width="1.1"/>
    <path d="M41 1 V28" stroke="#4a5e8c" stroke-width="0.8"/>
    <rect x="20" y="27" width="42" height="3" fill="#5a6068"/>
    <rect x="6" y="30" width="68" height="22" fill="#e2e2de"/>
    <rect x="26" y="30" width="30" height="22" fill="#eeeeec"/>
    <path d="M30 34 V45 M34 34 V45 M38 34 V45 M42 34 V45 M46 34 V45 M50 34 V45" stroke="#6a7280" stroke-width="1.6"/>
    <rect x="28" y="45" width="26" height="6" fill="#f4f4f4"/>
    <path d="M10 35 V46 M14 35 V46 M18 35 V46 M60 35 V45 M64 35 V45 M68 35 V45" stroke="#5a6270" stroke-width="2"/>
    <path d="M0 0 H6 Q10 20 8 52 H0Z" fill="#4a6440"/>
    <rect x="0" y="50" width="74" height="12" fill="#b4b4b0"/>
    <path d="M20 40 V62 M52 40 V62" stroke="#3a4a70" stroke-width="1"/>
    <!-- panel 2 -->
    <rect x="74" y="0" width="126" height="62" fill="url(#sky2)"/>
    <ellipse cx="95" cy="6" rx="20" ry="7" fill="#eef2f8"/><ellipse cx="80" cy="10" rx="8" ry="3.5" fill="#dde6f2"/>
    <path d="M73 34 L110 25 V12 L138 6 V62 H73Z" fill="#e6dcc4"/>
    <path d="M76 38 H136 M76 48 H136" stroke="#c4b48e" stroke-width="1"/>
    <path d="M80 38 V46 M86 37 V46 M92 36 V46 M98 35 V46 M104 34 V46 M80 50 V58 M87 50 V58 M94 50 V58 M101 50 V58" stroke="#766c5a" stroke-width="2.2"/>
    <path d="M117 22 V34 M123 21 V34 M129 20 V34" stroke="#5e5648" stroke-width="2.6"/>
    <path d="M122 47 a3 3 0 0 1 6 0 V60 H122Z" fill="#6b4a2c"/>
    <rect x="138" y="8" width="14" height="44" fill="#eeeeec"/>
    <path d="M141 12 V48 M147 12 V48" stroke="#9aa0aa" stroke-width="1.4"/>
    <rect x="147" y="3" width="6" height="47" fill="#f4f4f2"/>
    <path d="M153 48 V14 Q170 6 186 14 V48Z" fill="#f2eee4"/>
    <path d="M158 28 V48 M164 28 V48 M170 28 V48 M176 28 V48 M182 28 V48" stroke="#6a4040" stroke-width="1.6"/>
    <rect x="153" y="25" width="33" height="2" fill="#d8d0c0"/>
    <rect x="186" y="10" width="12" height="40" fill="#e8e8e6"/>
    <rect x="138" y="48" width="62" height="14" fill="#7c9c50"/>
    <ellipse cx="175" cy="52" rx="14" ry="5" fill="#94b060"/>
    <rect x="73" y="58" width="65" height="4" fill="#7a7a74"/>
    <!-- panel 3 -->
    <rect x="200" y="0" width="152" height="62" fill="url(#sky3)"/>
    <rect x="176" y="0" width="22" height="14" fill="#4a7ad0"/>
    <path d="M176 50 V12 Q186 6 198 16 V50Z" fill="#f0ece2"/>
    <path d="M180 30 V48 M186 30 V48 M192 30 V48" stroke="#6a4a40" stroke-width="1.4"/>
    <rect x="176" y="48" width="22" height="14" fill="#7c9c50"/>
    <rect x="198" y="1" width="74" height="56" fill="#d4be88"/>
    <path d="M202 6 V16 M212 6 V16 M222 6 V16 M232 6 V16 M252 6 V16 M262 6 V16 M202 24 V34 M212 24 V34 M252 24 V34 M262 24 V34 M202 40 V50 M252 40 V50 M262 40 V50" stroke="#f2eee0" stroke-width="3.2"/>
    <path d="M198 18 H272 M198 36 H272" stroke="#b8a474" stroke-width="1"/>
    <rect x="215" y="16" width="33" height="41" fill="#f4f4f0"/>
    <rect x="215" y="16" width="33" height="4" fill="#e0e0dc"/>
    <path d="M221 24 V50 M229 24 V50 M237 24 V50 M244 24 V50" stroke="#505868" stroke-width="2.2"/>
    <path d="M260 19 Q252 38 254 62 H266 Q268 38 260 19Z" fill="#3e5e34"/>
    <path d="M272 40 L320 10 L352 4 V52 H272Z" fill="#ebe6da"/>
    <path d="M272 40 L320 10" stroke="#d8d2c4" stroke-width="2"/>
    <path d="M274 44 H352" stroke="#c8c4b8" stroke-width="0.8"/>
    <path d="M280 45 V50 M292 45 V50 M304 45 V50" stroke="#6a6a68" stroke-width="2"/>
    <path d="M328 6 V22 M336 5 V22 M344 4 V22" stroke="#5a6676" stroke-width="4"/>
    <path d="M314 1 Q296 26 302 52 H326 Q332 26 314 1Z" fill="#a49436"/>
    <path d="M314 18 Q302 34 306 52 H322 Q328 34 314 18Z" fill="#6e7a34"/>
    <path d="M330 20 Q320 36 324 52 H346 Q350 34 330 20Z" fill="#4e6a3a"/>
    <rect x="272" y="50" width="80" height="12" fill="#a6a6a4"/>
    <rect x="300" y="46" width="52" height="5" fill="#46603a"/>
    <rect x="198" y="57" width="74" height="5" fill="#8e8a80"/>
  </svg>
  <!-- title block -->
  <div class="a" style="left:0;top:109px;width:352px;height:75px;background:linear-gradient(#37c2b7,#2b9f97)"></div>
  <div class="a" style="left:59px;top:184px;width:0;height:0;border-left:10px solid transparent;border-right:10px solid transparent;border-top:11px solid #2b9f97"></div>
  <div class="t" style="left:0;top:117.6px;width:352px;text-align:center;font-family:'Liberation Serif',serif;font-weight:bold;font-size:13.6px;line-height:15.75px;color:#082424;-webkit-text-stroke:0.25px #082424;white-space:normal">Обговорення <span style="text-decoration:underline #6a8888;text-decoration-thickness:1px;-webkit-text-stroke:0">проєкту</span> нової редакції ОПП<br>«Право» першого (бакалаврського) рівня<br>вищої освіти<br>з роботодавцями</div>
  <!-- subtitle text -->
  <div class="t" style="left:192.6px;top:190px;font-family:'Liberation Serif',serif;font-size:8.7px;line-height:10.6px;color:#333;white-space:pre"><b style="color:#111">Гарант ОПП «Право»</b> першого
(бакалаврського) рівня вищої
освіти: <b style="color:#111">Сергієнко Н.А.</b> – <span style="text-decoration:underline wavy #d08080;text-decoration-thickness:0.5px">д.ю.н.</span>,
професор кафедри публічного
права</div>
  <div class="a" style="left:5px;top:250px;width:342px;height:1px;background:#b8e2de"></div>
</div>
</div>
<div class="t" style="left:52px;top:270px;font-size:7px;color:#666">2</div>
<div class="a" style="left:59px;top:269.5px;width:75px;height:57px;overflow:hidden;background:linear-gradient(#fff,#eeeeee);border:0.8px solid #e2e2e2">
  <div class="a" style="left:0;top:0;width:75px;height:16.5px;background:linear-gradient(#3cd0c6,#2ea69c)"></div>
  <div class="a" style="left:1.5px;top:1.5px;width:6.5px;height:8px;background:#2e9f95;border-radius:0 0 3px 3px;border:0.5px solid #bfe8b0"></div>
  <div class="a" style="left:14px;top:16.5px;width:0;height:0;border-left:2.5px solid transparent;border-right:2.5px solid transparent;border-top:2.5px solid #2ea69c"></div>
  <div class="a" style="left:12px;top:10px;width:58px;height:1.0px;background:#1c4a48"></div>
  <div class="a" style="left:8px;top:19.5px;width:36px;height:0.8px;background:#a8a8a8"></div>
  <div class="a" style="left:8px;top:22px;width:30px;height:0.8px;background:#a8a8a8"></div>
  <div class="a" style="left:8px;top:24.5px;width:55px;height:0.8px;background:#a8a8a8"></div>
  <div class="a" style="left:8px;top:27px;width:28px;height:0.8px;background:#a8a8a8"></div>
  <div class="a" style="left:8px;top:29.5px;width:24px;height:0.8px;background:#a8a8a8"></div>
  <div class="a" style="left:8px;top:32px;width:38px;height:0.8px;background:#a8a8a8"></div>
  <div class="a" style="left:8px;top:34.5px;width:22px;height:0.8px;background:#a8a8a8"></div>
  <div class="a" style="left:8px;top:37px;width:62px;height:0.8px;background:#a8a8a8"></div>
  <div class="a" style="left:8px;top:39.5px;width:30px;height:0.8px;background:#a8a8a8"></div>
  <div class="a" style="left:8px;top:42px;width:36px;height:0.8px;background:#a8a8a8"></div>
  <div class="a" style="left:8px;top:44.5px;width:64px;height:0.8px;background:#a8a8a8"></div>
  <div class="a" style="left:8px;top:47px;width:60px;height:0.8px;background:#a8a8a8"></div>
  <div class="a" style="left:4px;top:50px;width:62px;height:0.8px;background:#a8a8a8"></div>
  <div class="a" style="left:2px;top:52.5px;width:71px;height:0.8px;background:#9fd4d0"></div>
</div>
<div class="t" style="left:52px;top:336px;font-size:7px;color:#666">3</div>
<div class="a" style="left:59px;top:335px;width:75px;height:57px;overflow:hidden;background:linear-gradient(#fff,#eeeeee);border:0.8px solid #e2e2e2">
  <div class="a" style="left:0;top:0;width:75px;height:16.5px;background:linear-gradient(#3cd0c6,#2ea69c)"></div>
  <div class="a" style="left:1.5px;top:1.5px;width:6.5px;height:8px;background:#2e9f95;border-radius:0 0 3px 3px;border:0.5px solid #bfe8b0"></div>
  <div class="a" style="left:14px;top:16.5px;width:0;height:0;border-left:2.5px solid transparent;border-right:2.5px solid transparent;border-top:2.5px solid #2ea69c"></div>
  <div class="a" style="left:14px;top:9.5px;width:52px;height:1.0px;background:#1c4a48"></div>
  <div class="a" style="left:3px;top:19px;width:68px;height:0.8px;background:#a0a0a0"></div>
  <div class="a" style="left:3px;top:21px;width:68px;height:0.8px;background:#a0a0a0"></div>
  <div class="a" style="left:3px;top:23px;width:40px;height:0.8px;background:#a0a0a0"></div>
  <div class="a" style="left:3px;top:26.5px;width:68px;height:0.8px;background:#a0a0a0"></div>
  <div class="a" style="left:3px;top:28.5px;width:50px;height:0.8px;background:#a0a0a0"></div>
  <div class="a" style="left:3px;top:32px;width:68px;height:0.8px;background:#a0a0a0"></div>
  <div class="a" style="left:3px;top:34px;width:68px;height:0.8px;background:#a0a0a0"></div>
  <div class="a" style="left:3px;top:36px;width:55px;height:0.8px;background:#a0a0a0"></div>
  <div class="a" style="left:3px;top:39.5px;width:68px;height:0.8px;background:#a0a0a0"></div>
  <div class="a" style="left:3px;top:41.5px;width:68px;height:0.8px;background:#a0a0a0"></div>
  <div class="a" style="left:3px;top:43.5px;width:36px;height:0.8px;background:#a0a0a0"></div>
  <div class="a" style="left:2px;top:53px;width:71px;height:0.8px;background:#9fd4d0"></div>
</div>
<div class="t" style="left:52px;top:401px;font-size:7px;color:#666">4</div>
<div class="a" style="left:59px;top:400px;width:75px;height:56px;overflow:hidden;background:linear-gradient(#fff,#eeeeee);border:0.8px solid #e2e2e2">
  <div class="a" style="left:0;top:0;width:75px;height:16.5px;background:linear-gradient(#3cd0c6,#2ea69c)"></div>
  <div class="a" style="left:1.5px;top:1.5px;width:6.5px;height:8px;background:#2e9f95;border-radius:0 0 3px 3px;border:0.5px solid #bfe8b0"></div>
  <div class="a" style="left:14px;top:16.5px;width:0;height:0;border-left:2.5px solid transparent;border-right:2.5px solid transparent;border-top:2.5px solid #2ea69c"></div>
  <div class="a" style="left:14px;top:4px;width:48px;height:0.9px;background:#1c4a48"></div>
  <div class="a" style="left:12px;top:7px;width:52px;height:0.9px;background:#1c4a48"></div>
  <div class="a" style="left:22px;top:10px;width:30px;height:0.9px;background:#1c4a48"></div>
  <div class="a" style="left:6px;top:19.5px;width:64px;height:0.8px;background:#a8a8a8"></div>
  <div class="a" style="left:6px;top:22.5px;width:64px;height:0.8px;background:#a8a8a8"></div>
  <div class="a" style="left:14px;top:25.5px;width:50px;height:0.8px;background:#a8a8a8"></div>
  <div class="a" style="left:2px;top:52.5px;width:71px;height:0.8px;background:#9fd4d0"></div>
</div>
<!-- ===== MAIN SLIDE ===== -->
<div class="a" style="left:235px;top:202px;width:352px;height:263px;overflow:hidden;background:linear-gradient(#fdfdfd,#f6f6f6)">
  <div class="a" style="left:0;top:0;width:352px;height:47px;background:#3dd2c8"></div>
  <!-- logo -->
  <svg class="a" style="left:2.5px;top:2px" width="36" height="44" viewBox="0 0 36 44">
    <path d="M1 1 H35 V30 Q35 36 18 43 Q1 36 1 30 Z" fill="#2b9a98" stroke="#9ad8a4" stroke-width="1"/>
    <path d="M4 3.5 H32 M4 6 H32 M6 8.5 H30" stroke="#7cc8b8" stroke-width="0.9"/>
    <path d="M4 11 H32" stroke="#b8e08a" stroke-width="0.7"/>
    <path d="M18 13 L30 29 M18 13 L6 29" fill="none" stroke="#c4e8a0" stroke-width="0.8"/>
    <path d="M15.5 15 L18 12 L20.5 15 Z" fill="#f8f8e0"/>
    <path d="M18 15 V26" stroke="#c4e8a0" stroke-width="0.6"/>
    <path d="M8 26 Q18 23 28 26" fill="none" stroke="#c4e8a0" stroke-width="0.7"/>
    <path d="M3 29 L12 27.5 L16 30 L10 31.5Z M33 29 L24 27.5 L20 30 L26 31.5Z" fill="#f4eea0"/>
    <path d="M6 33 L13 30.5 L16 33 L11 35Z M30 33 L23 30.5 L20 33 L25 35Z" fill="#e8e070"/>
    <path d="M18 29 L22.5 34 L18 39.5 L13.5 34 Z" fill="#fff4a8"/>
    <text x="18" y="41.5" font-size="3" text-anchor="middle" fill="#c8e8b0" font-family="Liberation Serif">1834</text>
  </svg>
  <!-- photo strip -->
  <svg class="a" style="left:0;top:47px" width="352" height="62" viewBox="0 0 352 62">
    <defs>
      <linearGradient id="tsky1" x1="0" y1="0" x2="0" y2="1"><stop offset="0" stop-color="#d6e2ee"/><stop offset="1" stop-color="#eef2f2"/></linearGradient>
      <linearGradient id="tsky2" x1="0" y1="0" x2="0" y2="1"><stop offset="0" stop-color="#2f62c4"/><stop offset="1" stop-color="#8cb2e2"/></linearGradient>
      <linearGradient id="tsky3" x1="0" y1="0" x2="0" y2="1"><stop offset="0" stop-color="#e4e8ec"/><stop offset="1" stop-color="#f2f4f4"/></linearGradient>
    </defs>
    <!-- panel 1 -->
    <rect x="0" y="0" width="74" height="62" fill="url(#tsky1)"/>
    <ellipse cx="20" cy="8" rx="14" ry="6" fill="#f4f6f8"/><ellipse cx="58" cy="6" rx="14" ry="6" fill="#f6f8f8"/>
    <path d="M21 31 Q22 0 41 1 Q60 0 61 31" fill="none" stroke="#4a5e8c" stroke-width="1.3"/>
    <path d="M26 30 Q28 6 41 5 Q54 6 56 30 M31 29 Q33 12 41 11 Q49 12 51 29 M21 14 H61 M23 21 H59" fill="none" stroke="#6a7ca4" stroke-width="0.8"/>
    <path d="M3 34 Q10 12 22 16 Q30 20 32 32 M50 32 Q52 20 60 16 Q70 12 74 30" fill="none" stroke="#4a5e8c" stroke-width="1.1"/>
    <path d="M41 1 V28" stroke="#4a5e8c" stroke-width="0.8"/>
    <rect x="20" y="27" width="42" height="3" fill="#5a6068"/>
    <rect x="6" y="30" width="68" height="22" fill="#e2e2de"/>
    <rect x="26" y="30" width="30" height="22" fill="#eeeeec"/>
    <path d="M30 34 V45 M34 34 V45 M38 34 V45 M42 34 V45 M46 34 V45 M50 34 V45" stroke="#6a7280" stroke-width="1.6"/>
    <rect x="28" y="45" width="26" height="6" fill="#f4f4f4"/>
    <path d="M10 35 V46 M14 35 V46 M18 35 V46 M60 35 V45 M64 35 V45 M68 35 V45" stroke="#5a6270" stroke-width="2"/>
    <path d="M0 0 H6 Q10 20 8 52 H0Z" fill="#4a6440"/>
    <rect x="0" y="50" width="74" height="12" fill="#b4b4b0"/>
    <path d="M20 40 V62 M52 40 V62" stroke="#3a4a70" stroke-width="1"/>
    <!-- panel 2 -->
    <rect x="74" y="0" width="126" height="62" fill="url(#tsky2)"/>
    <ellipse cx="95" cy="6" rx="20" ry="7" fill="#eef2f8"/><ellipse cx="80" cy="10" rx="8" ry="3.5" fill="#dde6f2"/>
    <path d="M73 34 L110 25 V12 L138 6 V62 H73Z" fill="#e6dcc4"/>
    <path d="M76 38 H136 M76 48 H136" stroke="#c4b48e" stroke-width="1"/>
    <path d="M80 38 V46 M86 37 V46 M92 36 V46 M98 35 V46 M104 34 V46 M80 50 V58 M87 50 V58 M94 50 V58 M101 50 V58" stroke="#766c5a" stroke-width="2.2"/>
    <path d="M117 22 V34 M123 21 V34 M129 20 V34" stroke="#5e5648" stroke-width="2.6"/>
    <path d="M122 47 a3 3 0 0 1 6 0 V60 H122Z" fill="#6b4a2c"/>
    <rect x="138" y="8" width="14" height="44" fill="#eeeeec"/>
    <path d="M141 12 V48 M147 12 V48" stroke="#9aa0aa" stroke-width="1.4"/>
    <rect x="147" y="3" width="6" height="47" fill="#f4f4f2"/>
    <path d="M153 48 V14 Q170 6 186 14 V48Z" fill="#f2eee4"/>
    <path d="M158 28 V48 M164 28 V48 M170 28 V48 M176 28 V48 M182 28 V48" stroke="#6a4040" stroke-width="1.6"/>
    <rect x="153" y="25" width="33" height="2" fill="#d8d0c0"/>
    <rect x="186" y="10" width="12" height="40" fill="#e8e8e6"/>
    <rect x="138" y="48" width="62" height="14" fill="#7c9c50"/>
    <ellipse cx="175" cy="52" rx="14" ry="5" fill="#94b060"/>
    <rect x="73" y="58" width="65" height="4" fill="#7a7a74"/>
    <!-- panel 3 -->
    <rect x="200" y="0" width="152" height="62" fill="url(#tsky3)"/>
    <rect x="176" y="0" width="22" height="14" fill="#4a7ad0"/>
    <path d="M176 50 V12 Q186 6 198 16 V50Z" fill="#f0ece2"/>
    <path d="M180 30 V48 M186 30 V48 M192 30 V48" stroke="#6a4a40" stroke-width="1.4"/>
    <rect x="176" y="48" width="22" height="14" fill="#7c9c50"/>
    <rect x="198" y="1" width="74" height="56" fill="#d4be88"/>
    <path d="M202 6 V16 M212 6 V16 M222 6 V16 M232 6 V16 M252 6 V16 M262 6 V16 M202 24 V34 M212 24 V34 M252 24 V34 M262 24 V34 M202 40 V50 M252 40 V50 M262 40 V50" stroke="#f2eee0" stroke-width="3.2"/>
    <path d="M198 18 H272 M198 36 H272" stroke="#b8a474" stroke-width="1"/>
    <rect x="215" y="16" width="33" height="41" fill="#f4f4f0"/>
    <rect x="215" y="16" width="33" height="4" fill="#e0e0dc"/>
    <path d="M221 24 V50 M229 24 V50 M237 24 V50 M244 24 V50" stroke="#505868" stroke-width="2.2"/>
    <path d="M260 19 Q252 38 254 62 H266 Q268 38 260 19Z" fill="#3e5e34"/>
    <path d="M272 40 L320 10 L352 4 V52 H272Z" fill="#ebe6da"/>
    <path d="M272 40 L320 10" stroke="#d8d2c4" stroke-width="2"/>
    <path d="M274 44 H352" stroke="#c8c4b8" stroke-width="0.8"/>
    <path d="M280 45 V50 M292 45 V50 M304 45 V50" stroke="#6a6a68" stroke-width="2"/>
    <path d="M328 6 V22 M336 5 V22 M344 4 V22" stroke="#5a6676" stroke-width="4"/>
    <path d="M314 1 Q296 26 302 52 H326 Q332 26 314 1Z" fill="#a49436"/>
    <path d="M314 18 Q302 34 306 52 H322 Q328 34 314 18Z" fill="#6e7a34"/>
    <path d="M330 20 Q320 36 324 52 H346 Q350 34 330 20Z" fill="#4e6a3a"/>
    <rect x="272" y="50" width="80" height="12" fill="#a6a6a4"/>
    <rect x="300" y="46" width="52" height="5" fill="#46603a"/>
    <rect x="198" y="57" width="74" height="5" fill="#8e8a80"/>
  </svg>
  <!-- title block -->
  <div class="a" style="left:0;top:109px;width:352px;height:75px;background:linear-gradient(#37c2b7,#2b9f97)"></div>
  <div class="a" style="left:59px;top:184px;width:0;height:0;border-left:10px solid transparent;border-right:10px solid transparent;border-top:11px solid #2b9f97"></div>
  <div class="t" style="left:0;top:117.6px;width:352px;text-align:center;font-family:'Liberation Serif',serif;font-weight:bold;font-size:13.6px;line-height:15.75px;color:#082424;-webkit-text-stroke:0.25px #082424;white-space:normal">Обговорення <span style="text-decoration:underline #6a8888;text-decoration-thickness:1px;-webkit-text-stroke:0">проєкту</span> нової редакції ОПП<br>«Право» першого (бакалаврського) рівня<br>вищої освіти<br>з роботодавцями</div>
  <!-- subtitle text -->
  <div class="t" style="left:192.6px;top:190px;font-family:'Liberation Serif',serif;font-size:8.7px;line-height:10.6px;color:#333;white-space:pre"><b style="color:#111">Гарант ОПП «Право»</b> першого
(бакалаврського) рівня вищої
освіти: <b style="color:#111">Сергієнко Н.А.</b> – <span style="text-decoration:underline wavy #d08080;text-decoration-thickness:0.5px">д.ю.н.</span>,
професор кафедри публічного
права</div>
  <div class="a" style="left:5px;top:250px;width:342px;height:1px;background:#b8e2de"></div>
</div>

<!-- ===== PARTICIPANT TILES ===== -->
<div class="a" style="left:697px;top:138px;width:153px;height:108px;background:#3c4043;border-radius:7px"></div>
<div class="a" style="left:859px;top:138px;width:151px;height:108px;background:#3c4043;border-radius:7px"></div>
<div class="a" style="left:697px;top:256px;width:153px;height:108px;background:#3c4043;border-radius:7px"></div>
<div class="a" style="left:859px;top:256px;width:151px;height:108px;background:#3c4043;border-radius:7px"></div>
<!-- avatars -->
<div class="a" style="left:751px;top:169.5px;width:45px;height:45px;border-radius:50%;background:#5e35c4"></div>
<div class="t" style="left:751px;top:180.3px;width:45px;text-align:center;font-size:24px;color:#fff;transform:scaleX(1.1)">H</div>
<div class="a" style="left:751px;top:287.5px;width:45px;height:45px;border-radius:50%;background:#c2185b"></div>
<div class="t" style="left:751px;top:298.3px;width:45px;text-align:center;font-size:24px;color:#fff;transform:scaleX(1.1)">M</div>
<div class="a" style="left:912px;top:287.5px;width:45px;height:45px;border-radius:50%;background:#1a86d6"></div>
<div class="t" style="left:912px;top:298.3px;width:45px;text-align:center;font-size:24px;color:#fff;transform:scaleX(1.1)">A</div>
<!-- photo avatar -->
<svg class="a" style="left:912px;top:169.5px" width="45" height="45" viewBox="0 0 45 45">
  <defs><clipPath id="avc"><circle cx="22.5" cy="22.5" r="22.5"/></clipPath>
  <linearGradient id="avsky" x1="0" y1="0" x2="0" y2="1"><stop offset="0" stop-color="#3a66c8"/><stop offset="1" stop-color="#8ab2e6"/></linearGradient></defs>
  <g clip-path="url(#avc)">
    <rect width="45" height="21" fill="url(#avsky)"/>
    <rect y="21" width="45" height="12" fill="#1c3c7c"/>
    <rect y="33" width="45" height="12" fill="#2c4e7c"/>
    <path d="M16 21 L31 10.5 L40 14 L45 21Z" fill="#8c7e70"/>
    <rect x="17" y="21" width="28" height="2" fill="#6a5e52"/>
    <rect x="18" y="23" width="24" height="12" fill="#3a4458"/>
    <rect x="21" y="24" width="7" height="8" fill="#6a7a9a"/>
    <rect x="30" y="24" width="9" height="8" fill="#5a6a8a"/>
    <rect x="0" y="30" width="10" height="2" fill="#e8ecf0"/>
    <path d="M8 45 V32 H17 V28 H28 V36 H36 L40 45Z" fill="#7e9e44"/>
    <rect x="7" y="31" width="21" height="8" fill="#ecebe4"/>
    <rect x="17" y="28" width="10" height="4" fill="#f2f0ea"/>
    <path d="M8 39 H45 V45 H8Z" fill="#86a24a"/>
    <rect x="28" y="33" width="14" height="5" fill="#2c2e30"/>
  </g>
</svg>
<!-- mute icons -->
<svg class="a" style="left:818px;top:149px" width="20" height="20" viewBox="0 0 20 20"><circle cx="10" cy="10" r="10.5" fill="#333639"/><path d="M8.3 6.2 A1.7 1.7 0 0 1 11.7 6.2 V10 A1.7 1.7 0 0 1 8.3 10 Z" fill="#fff"/><path d="M6.5 9.5 A3.5 3.5 0 0 0 13.5 9.5 M10 13 V15" fill="none" stroke="#fff" stroke-width="1"/><path d="M5.5 5 L14.5 15" stroke="#333639" stroke-width="2.2"/><path d="M5.5 5 L14.5 15" stroke="#fff" stroke-width="1.1"/></svg>
<svg class="a" style="left:818px;top:267px" width="20" height="20" viewBox="0 0 20 20"><circle cx="10" cy="10" r="10.5" fill="#333639"/><path d="M8.3 6.2 A1.7 1.7 0 0 1 11.7 6.2 V10 A1.7 1.7 0 0 1 8.3 10 Z" fill="#fff"/><path d="M6.5 9.5 A3.5 3.5 0 0 0 13.5 9.5 M10 13 V15" fill="none" stroke="#fff" stroke-width="1"/><path d="M5.5 5 L14.5 15" stroke="#333639" stroke-width="2.2"/><path d="M5.5 5 L14.5 15" stroke="#fff" stroke-width="1.1"/></svg>
<svg class="a" style="left:979px;top:267px" width="20" height="20" viewBox="0 0 20 20"><circle cx="10" cy="10" r="10.5" fill="#333639"/><path d="M8.3 6.2 A1.7 1.7 0 0 1 11.7 6.2 V10 A1.7 1.7 0 0 1 8.3 10 Z" fill="#fff"/><path d="M6.5 9.5 A3.5 3.5 0 0 0 13.5 9.5 M10 13 V15" fill="none" stroke="#fff" stroke-width="1"/><path d="M5.5 5 L14.5 15" stroke="#333639" stroke-width="2.2"/><path d="M5.5 5 L14.5 15" stroke="#fff" stroke-width="1.1"/></svg>
<!-- names -->
<div class="t" style="left:711px;top:223.5px;font-size:12px;letter-spacing:0.16px;color:#fff;-webkit-text-stroke:0.45px #fff">Наталія Сергієнко</div>
<div class="t" style="left:872.5px;top:223.5px;font-size:12px;letter-spacing:0.16px;color:#fff;-webkit-text-stroke:0.45px #fff">Шевчук Анатолій</div>
<div class="t" style="left:711px;top:341.5px;font-size:12px;letter-spacing:0.16px;color:#fff;-webkit-text-stroke:0.45px #fff">Maksym Miahchenko</div>
<div class="t" style="left:872.5px;top:341.5px;font-size:12px;letter-spacing:0.16px;color:#fff;-webkit-text-stroke:0.45px #fff">Адвокат Ігор Пшечук</div>

<!-- self view -->
<div class="a" style="left:778px;top:374px;width:152px;height:107px;border:2.5px solid #8ab4f8;border-radius:8px;background:#3c4043;overflow:hidden">
  <svg class="a" style="left:1.5px;top:8.5px" width="144" height="86" viewBox="0 0 144 86">
    <defs>
      <linearGradient id="wall" x1="0" y1="0" x2="0" y2="1"><stop offset="0" stop-color="#9c8068"/><stop offset="1" stop-color="#6e5842"/></linearGradient>
      <linearGradient id="face" x1="0" y1="0" x2="0" y2="1"><stop offset="0" stop-color="#f0d8cc"/><stop offset="1" stop-color="#e2bcae"/></linearGradient>
      <linearGradient id="win" x1="0" y1="0" x2="1" y2="0"><stop offset="0" stop-color="#c8dcea"/><stop offset="1" stop-color="#e8f0f4"/></linearGradient>
    </defs>
    <rect width="144" height="86" fill="url(#wall)"/>
    <rect x="0" y="0" width="17" height="86" fill="url(#win)"/>
    <rect x="15" y="0" width="3" height="86" fill="#e8ecee"/>
    <rect x="18" y="0" width="3" height="86" fill="#7a6a58"/>
    <!-- frames -->
    <rect x="24" y="11" width="16" height="19" fill="#b8a898" stroke="#5a4838" stroke-width="1.5"/>
    <rect x="41" y="9" width="14" height="17" fill="#c4b8a8" stroke="#5a4838" stroke-width="1.5"/>
    <rect x="28" y="34" width="14" height="16" fill="#cac2b4" stroke="#5a4838" stroke-width="1.5"/>
    <rect x="26" y="52" width="11" height="13" fill="#c0b8a8" stroke="#5a4838" stroke-width="1.5"/>
    <rect x="88" y="3" width="6" height="6" fill="#c8beb0"/>
    <!-- plant -->
    <ellipse cx="24" cy="74" rx="10" ry="10" fill="#6a8a48"/>
    <circle cx="20" cy="70" r="2.5" fill="#e0c040"/><circle cx="27" cy="75" r="2" fill="#d86a40"/><circle cx="22" cy="79" r="2" fill="#e8d060"/>
    <!-- bookshelf -->
    <rect x="86" y="0" width="46" height="86" fill="#6a5440"/>
    <rect x="88" y="0" width="4" height="24" fill="#e6e6e4"/>
    <rect x="92" y="0" width="3" height="24" fill="#2a2a2a"/>
    <rect x="95" y="0" width="4" height="24" fill="#dcdcd8"/>
    <rect x="99" y="0" width="4" height="24" fill="#242a26"/>
    <rect x="103" y="0" width="3" height="24" fill="#1e3a2e"/>
    <rect x="106" y="0" width="5" height="24" fill="#b22a2a"/>
    <rect x="111" y="0" width="8" height="24" fill="#222"/>
    <rect x="86" y="24" width="46" height="4" fill="#a88a64"/>
    <rect x="89" y="28" width="40" height="22" fill="#e2e2dc"/>
    <path d="M89 32 H129 M89 36 H129 M89 40 H129 M89 44 H129 M89 47 H129" stroke="#8a929a" stroke-width="0.9"/>
    <rect x="86" y="50" width="46" height="4" fill="#a88a64"/>
    <rect x="89" y="54" width="40" height="7" fill="#2e3440"/>
    <rect x="89" y="61" width="40" height="3" fill="#5a6a9a"/>
    <rect x="89" y="64" width="40" height="7" fill="#c84a38"/>
    <rect x="89" y="71" width="40" height="6" fill="#2a5a66"/>
    <rect x="89" y="77" width="40" height="9" fill="#3a3a48"/>
    <rect x="130" y="0" width="14" height="86" fill="#d0d6da"/>
    <path d="M131 10 H144 M131 20 H144 M131 30 H144 M131 40 H144 M131 50 H144 M131 60 H144 M131 70 H144 M131 80 H144" stroke="#b0b8be" stroke-width="0.8"/>
    <rect x="128" y="0" width="3" height="86" fill="#e8ecee"/>
    <!-- hair -->
    <path d="M34 86 C36 62 38 42 42 28 C46 15 55 8 66 8 C78 8 88 15 91 29 C94 44 95 64 97 86 Z" fill="#2e2422"/>
    <!-- face -->
    <path d="M47 43 C47 29 55 22 66 22 C77 22 85 29 85 43 C85 61 77 75 66 75 C55 75 47 61 47 43 Z" fill="url(#face)"/>
    <path d="M46 42 C47 27 56 17 70 17 C61 23 52 31 46 42Z" fill="#2e2422"/>
    <path d="M52 47 Q56 45.5 60 47 M72 47 Q76 45.5 80 47" stroke="#6a5048" stroke-width="1.2" fill="none"/>
    <path d="M61 65 Q66 66.5 71 65" stroke="#b87a70" stroke-width="1.3" fill="none"/>
    <path d="M66 50 V59" stroke="#d8b0a0" stroke-width="1"/>
    <path d="M57 73 Q66 80 75 73 L77 86 H55 Z" fill="#dcb4a2"/>
  </svg>
  <div class="a" style="left:119px;top:10px;width:22px;height:22px;border-radius:50%;background:#1a73e8"></div>
  <div class="a" style="left:124px;top:20px;width:3px;height:3px;border-radius:50%;background:#fff;box-shadow:5px 0 #fff,10px 0 #fff"></div>
  <div class="t" style="left:11.5px;top:84px;font-size:12px;letter-spacing:0.16px;color:#fff;-webkit-text-stroke:0.45px #fff;text-shadow:0 0 2px rgba(0,0,0,.4)">Наталія Артурівна ...</div>
</div>
<!-- ===== BOTTOM BAR ===== -->
<div class="t" style="left:55.5px;top:508.6px;font-size:13.3px;color:#fff;-webkit-text-stroke:0.5px #fff">10:02</div>
<div class="a" style="left:99px;top:508px;width:1px;height:15px;background:#5f6368"></div>
<div class="t" style="left:110px;top:508.6px;font-size:13.2px;letter-spacing:0.44px;color:#fff;-webkit-text-stroke:0.5px #fff">Зустріч з роботодавцями- обгово...</div>
<!-- control buttons -->
<div class="a" style="left:354px;top:498px;width:34px;height:34px;border-radius:50%;background:#36383b"></div>
<div class="a" style="left:397px;top:498px;width:34px;height:34px;border-radius:50%;background:#36383b"></div>
<div class="a" style="left:441px;top:498px;width:34px;height:34px;border-radius:50%;background:#36383b"></div>
<div class="a" style="left:484px;top:498px;width:34px;height:34px;border-radius:50%;background:#36383b"></div>
<div class="a" style="left:527px;top:498px;width:34px;height:34px;border-radius:50%;background:#8ab4f8"></div>
<div class="a" style="left:571px;top:498px;width:34px;height:34px;border-radius:50%;background:#36383b"></div>
<div class="a" style="left:614px;top:498px;width:34px;height:34px;border-radius:50%;background:#36383b"></div>
<div class="a" style="left:657px;top:498px;width:48px;height:34px;border-radius:17px;background:#ea4335"></div>
<!-- icons on buttons (upper parts visible) -->
<div class="a" style="left:369px;top:509px;width:4px;height:12px;border-radius:2px;background:#fff"></div>
<svg class="a" style="left:405px;top:510px" width="18" height="12" viewBox="0 0 18 12"><rect x="1" y="1" width="11" height="10" rx="1" fill="none" stroke="#fff" stroke-width="1.6"/><path d="M12 5 L17 2 V10 L12 7" fill="none" stroke="#fff" stroke-width="1.6"/></svg>
<svg class="a" style="left:449px;top:508px" width="18" height="14" viewBox="0 0 18 14"><rect x="1" y="1" width="16" height="12" rx="1" fill="none" stroke="#fff" stroke-width="1.6"/><path d="M4 5 H8 V8 H4Z M10 5 H14 V8 H10Z" fill="#fff"/></svg>
<svg class="a" style="left:492px;top:507px" width="18" height="18" viewBox="0 0 18 18"><circle cx="9" cy="9" r="7.5" fill="none" stroke="#fff" stroke-width="1.8"/><circle cx="6.3" cy="7.5" r="1.3" fill="#fff"/><circle cx="11.7" cy="7.5" r="1.3" fill="#fff"/></svg>
<svg class="a" style="left:535px;top:507px" width="18" height="14" viewBox="0 0 18 14"><rect x="1" y="1" width="16" height="12" rx="1" fill="none" stroke="#062e6f" stroke-width="1.8"/><path d="M9 4 L5.5 8 H12.5Z" fill="#062e6f"/></svg>
<svg class="a" style="left:580px;top:505px" width="16" height="16" viewBox="0 0 16 16"><path d="M3 16 V7 M6 16 V3 M9 16 V2 M12 16 V4 M14 16 V8" stroke="#fff" stroke-width="2" stroke-linecap="round"/></svg>
<div class="a" style="left:629px;top:508px;width:4px;height:4px;border-radius:50%;background:#fff"></div>
<svg class="a" style="left:669px;top:508px" width="24" height="10" viewBox="0 0 24 10"><path d="M1 7 Q12 -2 23 7 L20 9 L16 6 V4 Q12 3 8 4 V6 L4 9 Z" fill="#fff"/></svg>
<!-- notification bar -->
<div class="a" style="left:353px;top:514.5px;width:319px;height:29px;background:#f4f4f4;border:1px solid #dadada;box-shadow:0 1px 3px rgba(0,0,0,.4)"></div>
<div class="a" style="left:359px;top:524px;width:1.5px;height:9px;background:#c8c8c8;box-shadow:3px 0 #c8c8c8"></div>
<div class="t" style="left:370.6px;top:524.6px;font-size:8.6px;letter-spacing:-0.3px;color:#333">meet.google.com пользуется окном.</div>
<div class="a" style="left:509px;top:519px;width:121px;height:20.5px;background:#1a73e8;border-radius:3px"></div>
<div class="t" style="left:509px;top:525px;width:121px;text-align:center;font-size:7.7px;font-weight:bold;color:#fff">Прекратить общий доступ</div>
<div class="t" style="left:636.5px;top:525px;font-size:8.2px;color:#1a73e8;text-decoration:underline">Скрыть</div>
<!-- right icons -->
<svg class="a" style="left:824px;top:506px" width="18" height="18" viewBox="0 0 18 18"><circle cx="9" cy="9" r="7.8" fill="none" stroke="#fff" stroke-width="1.7"/><rect x="8.1" y="7.7" width="1.8" height="5.3" fill="#fff"/><circle cx="9" cy="5.3" r="1.1" fill="#fff"/></svg>
<svg class="a" style="left:863px;top:507px" width="20" height="16" viewBox="0 0 20 16"><circle cx="7" cy="4.5" r="3" fill="none" stroke="#fff" stroke-width="1.7"/><path d="M1 15 V13 C1 10.5 4 9.5 7 9.5 C10 9.5 13 10.5 13 13 V15 Z" fill="none" stroke="#fff" stroke-width="1.7"/><path d="M12.5 1.7 A3 3 0 0 1 12.5 7.3" fill="none" stroke="#fff" stroke-width="1.7"/><path d="M15 9.8 C17 10.5 18.5 11.5 18.5 13 V15" fill="none" stroke="#fff" stroke-width="1.7"/></svg>
<div class="a" style="left:874px;top:488px;width:17px;height:17px;border-radius:50%;background:#5f6368"></div>
<div class="t" style="left:874px;top:491.5px;width:17px;text-align:center;font-size:9.5px;font-weight:bold;color:#fff">6</div>
<svg class="a" style="left:904px;top:506px" width="18" height="19" viewBox="0 0 18 19"><path d="M1 1 H17 V14 H4.5 L1 17.5 Z" fill="none" stroke="#fff" stroke-width="1.7" stroke-linejoin="round"/><path d="M4.5 5 H13.5 M4.5 7.7 H13.5 M4.5 10.4 H10.5" stroke="#fff" stroke-width="1.5"/></svg>
<svg class="a" style="left:944px;top:506px" width="19" height="18" viewBox="0 0 19 18"><path d="M8.5 1.2 L12 7 H5 Z" fill="none" stroke="#fff" stroke-width="1.6" stroke-linejoin="round"/><rect x="1.3" y="10" width="6.5" height="6.5" fill="none" stroke="#fff" stroke-width="1.6"/><circle cx="14" cy="13.2" r="3.4" fill="none" stroke="#fff" stroke-width="1.6"/></svg>
<svg class="a" style="left:985px;top:505px" width="19" height="20" viewBox="0 0 19 20"><path d="M4 8 V5.5 A4.5 4.5 0 0 1 13 5.5 V8" fill="none" stroke="#fff" stroke-width="1.6"/><path d="M9.5 18.5 H1.8 V8 H15.5 V10.5" fill="none" stroke="#fff" stroke-width="1.6"/><circle cx="14.5" cy="15" r="4" fill="#fff"/><circle cx="14.5" cy="13.5" r="1" fill="#202124"/><path d="M12.8 17 A1.7 1.5 0 0 1 16.2 17" fill="#202124"/></svg>

<!-- MEET7 -->
<!-- ============ TASKBAR ============ -->
<div class="a" style="left:0;top:549px;width:1024px;height:27px;background:#1e2023"></div>
<svg class="a" style="left:11px;top:556px" width="12" height="12" viewBox="0 0 12 12"><path d="M0 1.6 L5.2 0.9 V5.6 H0Z M5.9 0.8 L12 0 V5.6 H5.9Z M0 6.3 H5.2 V11.1 L0 10.4Z M5.9 6.3 H12 V12 L5.9 11.2Z" fill="#fff"/></svg>
<div class="a" style="left:32px;top:549px;width:192px;height:27px;background:#f0f0f0"></div>
<svg class="a" style="left:39px;top:557px" width="12" height="12" viewBox="0 0 12 12"><circle cx="7.3" cy="4.7" r="3.6" fill="none" stroke="#222" stroke-width="1.1"/><path d="M4.7 7.3 L0.8 11.2" stroke="#222" stroke-width="1.3"/></svg>
<div class="t" style="left:59px;top:557.5px;font-size:10.4px;color:#444">Пошук</div>
<!-- winter decor -->
<svg class="a" style="left:174px;top:549px" width="50" height="27" viewBox="0 0 50 27">
  <path d="M25 12 L35 -1 M31 10 L44 -1" stroke="#c8c4d0" stroke-width="0.5"/>
  <path d="M1.3 24.5 L6 10 L10.7 24.5Z" fill="#2e7a5a"/><path d="M3.2 19 L6 15 L8.8 19 M2.4 22 L6 18.5 L9.6 22" fill="none" stroke="#e8f4ec" stroke-width="1"/>
  <path d="M13 24 V12.5 L19.5 5.8 L26 12.5 V24Z" fill="#ddb57a"/><path d="M12.5 13 L19.5 5.5 L26.5 13" fill="none" stroke="#8a5a3a" stroke-width="0.9"/><rect x="18" y="19" width="2.6" height="5" fill="#7a5030"/><circle cx="19.5" cy="13.5" r="1.3" fill="#e8c8a0"/>
  <rect x="30" y="3.8" width="9.8" height="6.7" fill="#d8503a"/>
  <path d="M28 24.6 V16.5 L36 13.5 L44.8 16.5 V24.6Z" fill="#a8703a"/><path d="M27.5 17 L36 13.2 L45.3 17" fill="none" stroke="#6a4420" stroke-width="1"/>
  <path d="M41 15.8 L44.4 4 L47.8 15.8Z" fill="#2e8060"/><path d="M42.2 12 L44.4 9 L46.6 12" fill="none" stroke="#e0f0e8" stroke-width="0.7"/>
  <path d="M0 25.5 Q25 23.5 50 25.5 V27 H0Z" fill="#e4dcec"/>
</svg>
<!-- taskbar app icons -->
<div class="a" style="left:231px;top:555px;width:19px;height:14px;background:#f2c23a;border-radius:1px"></div>
<div class="a" style="left:231px;top:559px;width:19px;height:10px;background:#f8d870;border-radius:1px"></div>
<div class="a" style="left:236px;top:562px;width:9px;height:4px;background:#3a9ad8"></div>
<div class="a" style="left:266px;top:555px;width:17px;height:15px;background:#2b5797;border-radius:1px"></div>
<div class="a" style="left:276px;top:556px;width:8px;height:13px;background:#fff;border:1px solid #ccc"></div>
<div class="t" style="left:267px;top:558px;font-size:9px;font-weight:bold;color:#fff">W</div>
<div class="a" style="left:262px;top:574px;width:27px;height:2px;background:#76b9ed"></div>
<div class="a" style="left:326px;top:549px;width:32px;height:27px;background:#3a3a3a"></div>
<svg class="a" style="left:333px;top:553px" width="17" height="18" viewBox="0 0 17 18"><ellipse cx="8.5" cy="9" rx="7" ry="8" fill="#e5152b"/><ellipse cx="8.5" cy="9" rx="3" ry="6" fill="#3a3a3a"/></svg>
<div class="a" style="left:326px;top:574px;width:32px;height:2px;background:#76b9ed"></div>
<svg class="a" style="left:365px;top:553px" width="18" height="18" viewBox="0 0 18 18"><circle cx="9" cy="9" r="8.5" fill="#db4437"/><path d="M9 9 L16.4 4.75 A8.5 8.5 0 0 1 9 17.5Z" fill="#fbbc04"/><path d="M9 9 L9 17.5 A8.5 8.5 0 0 1 1.6 4.75Z" fill="#0f9d58"/><circle cx="9" cy="9" r="4" fill="#fff"/><circle cx="9" cy="9" r="3.1" fill="#4285f4"/></svg>
<div class="a" style="left:398px;top:554px;width:19px;height:16px;background:#d24726;border-radius:1px"></div>
<div class="a" style="left:409px;top:556px;width:9px;height:12px;background:#fff;border:1px solid #ddd"></div>
<div class="t" style="left:400px;top:557px;font-size:10px;font-weight:bold;color:#fff">P</div>
<div class="a" style="left:395px;top:574px;width:26px;height:2px;background:#76b9ed"></div>
<!-- tray -->
<svg class="a" style="left:707px;top:553px" width="20" height="17" viewBox="0 0 20 17"><ellipse cx="10" cy="12" rx="9" ry="4.5" fill="#d6e4f4"/><circle cx="8" cy="9" r="5" fill="#c8daf0"/><circle cx="13" cy="10" r="4" fill="#e0ecf8"/><circle cx="13" cy="4" r="3.5" fill="#e04040"/><text x="13" y="5.7" font-size="4.5" text-anchor="middle" fill="#fff" font-family="Liberation Sans" font-weight="bold">1</text></svg>
<div class="t" style="left:730.5px;top:558.2px;font-size:9.4px;color:#fff">3°C</div><div class="t" style="left:750.8px;top:558.2px;font-size:9.4px;color:#fff">Mostly cloudy</div>
<svg class="a" style="left:826px;top:559px" width="9" height="6" viewBox="0 0 9 6"><path d="M0.5 5.5 L4.5 1 L8.5 5.5" fill="none" stroke="#fff" stroke-width="1"/></svg>
<svg class="a" style="left:842px;top:555px" width="9" height="12" viewBox="0 0 9 12"><rect x="0.5" y="2.5" width="8" height="7" rx="2" fill="none" stroke="#ddd" stroke-width="0.9"/><circle cx="4.5" cy="6" r="1.5" fill="#ddd"/></svg>
<svg class="a" style="left:857px;top:555px" width="12" height="12" viewBox="0 0 12 12"><rect x="0.5" y="1" width="10" height="7" fill="none" stroke="#ddd" stroke-width="0.9"/><path d="M5.5 8 V11 M3 11 H8" stroke="#ddd" stroke-width="0.9"/></svg>
<svg class="a" style="left:872px;top:555px" width="13" height="12" viewBox="0 0 13 12"><path d="M0.5 4 H3 L6.5 1 V11 L3 8 H0.5Z" fill="none" stroke="#ddd" stroke-width="0.9"/><path d="M8.5 3.5 Q10 6 8.5 8.5 M10.3 2 Q12.5 6 10.3 10" fill="none" stroke="#ddd" stroke-width="0.9"/></svg>
<svg class="a" style="left:889px;top:555px" width="12" height="13" viewBox="0 0 12 13"><rect x="6" y="1" width="2" height="2" fill="#ddd"/><rect x="9" y="1" width="2" height="2" fill="#ddd"/><rect x="6" y="4" width="2" height="2" fill="#ddd"/><rect x="9" y="4" width="2" height="2" fill="#ddd"/><circle cx="4" cy="9" r="3.2" fill="#d03030"/><text x="4" y="10.8" font-size="4.8" text-anchor="middle" fill="#fff" font-family="Liberation Sans" font-weight="bold">2</text></svg>
<svg class="a" style="left:904px;top:557px" width="13" height="8" viewBox="0 0 13 8"><rect x="0.5" y="0.5" width="11" height="7" fill="none" stroke="#ddd" stroke-width="0.9"/><rect x="2" y="2" width="8" height="4" fill="#ddd"/></svg>
<div class="t" style="left:923.9px;top:559.4px;font-size:7.4px;color:#fff">УКР</div>
<div class="t" style="left:956.8px;top:552.7px;font-size:7.6px;color:#fff">10:02</div>
<div class="t" style="left:946.7px;top:564.4px;font-size:7.45px;color:#fff">20.12.2023</div>
<svg class="a" style="left:996px;top:557px" width="13" height="12" viewBox="0 0 13 12"><path d="M0.7 0.7 H11.3 V8.5 H7 L6 10.8 L5 8.5 H0.7 Z" fill="none" stroke="#ddd" stroke-width="0.9"/></svg><div class="a" style="left:1020px;top:549px;width:1px;height:27px;background:#555"></div>

</body></html>
